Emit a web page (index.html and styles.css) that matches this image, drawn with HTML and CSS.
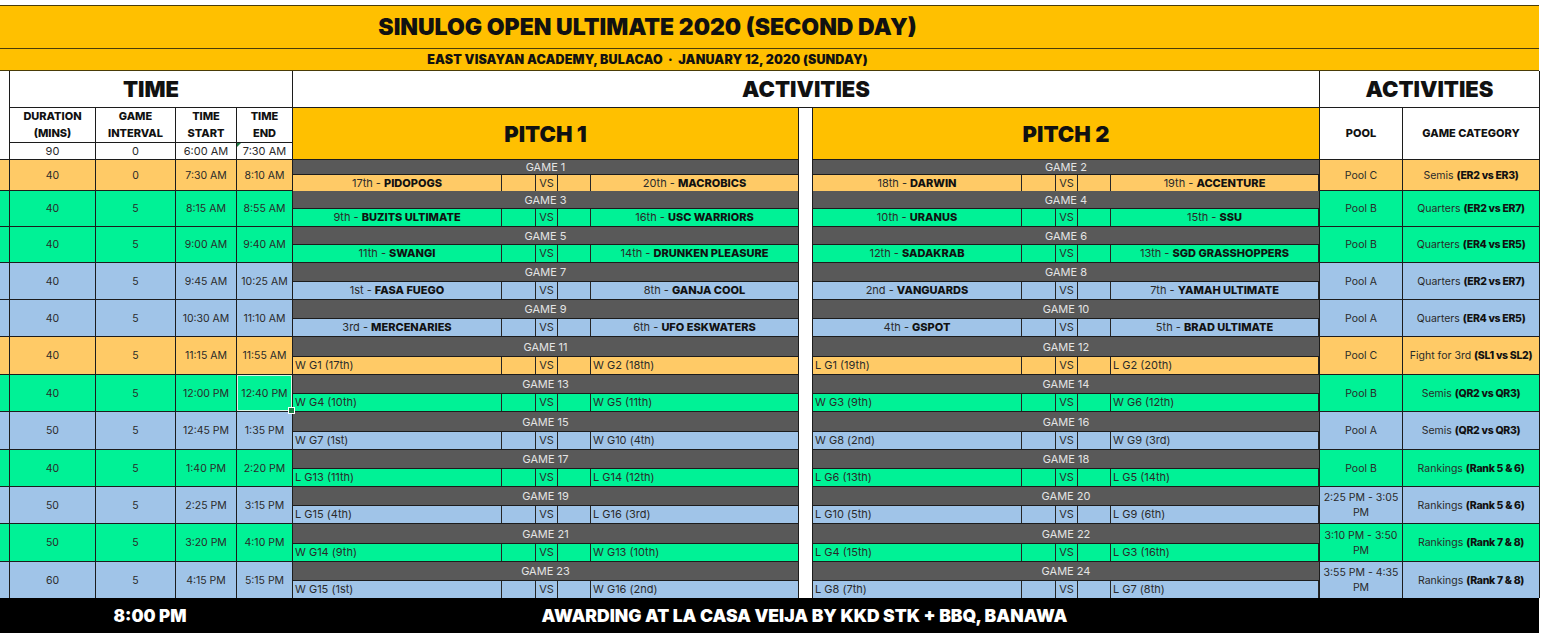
FILE: index.html
```html
<!DOCTYPE html>
<html>
<head>
<meta charset="utf-8">
<title>Sinulog Open Ultimate 2020</title>
<link rel="stylesheet" href="styles.css">
</head>
<body>
<div class="sheet">
  <div class="title">SINULOG OPEN ULTIMATE 2020 (SECOND DAY)</div>
  <div class="subtitle">EAST VISAYAN ACADEMY, BULACAO &nbsp;·&nbsp; JANUARY 12, 2020 (SUNDAY)</div>
  <div class="grid">
    <div class="hcell left-head"></div>
    <div class="hcell big time-head">TIME</div>
    <div class="hcell big act-head">ACTIVITIES</div>
    <div class="hcell big act2-head">ACTIVITIES</div>

    <div class="hcell colh c2">DURATION<br>(MINS)</div>
    <div class="hcell colh c3">GAME<br>INTERVAL</div>
    <div class="hcell colh c4">TIME<br>START</div>
    <div class="hcell colh c5">TIME<br>END</div>
    <div class="pitch p1">PITCH 1</div>
    <div class="gapcol"></div>
    <div class="pitch p2">PITCH 2</div>
    <div class="hcell colh pool-head">POOL</div>
    <div class="hcell colh cat-head">GAME CATEGORY</div>

    <div class="hcell val c2 r3">90</div>
    <div class="hcell val c3 r3">0</div>
    <div class="hcell val c4 r3">6:00 AM</div>
    <div class="hcell val c5 r3 tri">7:30 AM</div>

    <!-- Row 1 -->
    <div class="cell y"></div>
    <div class="cell y">40</div>
    <div class="cell y">0</div>
    <div class="cell y">7:30 AM</div>
    <div class="cell y">8:10 AM</div>
    <div class="game y"><div class="glabel">GAME 1</div><div class="teams"><div class="team">17th - <b>PIDOPOGS</b></div><div></div><div class="vs">VS</div><div></div><div class="team">20th - <b>MACROBICS</b></div></div></div>
    <div class="game y"><div class="glabel">GAME 2</div><div class="teams"><div class="team">18th - <b>DARWIN</b></div><div></div><div class="vs">VS</div><div></div><div class="team">19th - <b>ACCENTURE</b></div></div></div>
    <div class="cell y">Pool C</div>
    <div class="cell y cat">Semis&nbsp;<b>(ER2 vs ER3)</b></div>

    <!-- Row 2 -->
    <div class="cell g"></div>
    <div class="cell g">40</div>
    <div class="cell g">5</div>
    <div class="cell g">8:15 AM</div>
    <div class="cell g">8:55 AM</div>
    <div class="game g"><div class="glabel">GAME 3</div><div class="teams"><div class="team">9th - <b>BUZITS ULTIMATE</b></div><div></div><div class="vs">VS</div><div></div><div class="team">16th - <b>USC WARRIORS</b></div></div></div>
    <div class="game g"><div class="glabel">GAME 4</div><div class="teams"><div class="team">10th - <b>URANUS</b></div><div></div><div class="vs">VS</div><div></div><div class="team">15th - <b>SSU</b></div></div></div>
    <div class="cell g">Pool B</div>
    <div class="cell g cat">Quarters&nbsp;<b>(ER2 vs ER7)</b></div>

    <!-- Row 3 -->
    <div class="cell g"></div>
    <div class="cell g">40</div>
    <div class="cell g">5</div>
    <div class="cell g">9:00 AM</div>
    <div class="cell g">9:40 AM</div>
    <div class="game g"><div class="glabel">GAME 5</div><div class="teams"><div class="team">11th - <b>SWANGI</b></div><div></div><div class="vs">VS</div><div></div><div class="team">14th - <b>DRUNKEN PLEASURE</b></div></div></div>
    <div class="game g"><div class="glabel">GAME 6</div><div class="teams"><div class="team">12th - <b>SADAKRAB</b></div><div></div><div class="vs">VS</div><div></div><div class="team">13th - <b>SGD GRASSHOPPERS</b></div></div></div>
    <div class="cell g">Pool B</div>
    <div class="cell g cat">Quarters&nbsp;<b>(ER4 vs ER5)</b></div>

    <!-- Row 4 -->
    <div class="cell b"></div>
    <div class="cell b">40</div>
    <div class="cell b">5</div>
    <div class="cell b">9:45 AM</div>
    <div class="cell b">10:25 AM</div>
    <div class="game b"><div class="glabel">GAME 7</div><div class="teams"><div class="team">1st - <b>FASA FUEGO</b></div><div></div><div class="vs">VS</div><div></div><div class="team">8th - <b>GANJA COOL</b></div></div></div>
    <div class="game b"><div class="glabel">GAME 8</div><div class="teams"><div class="team">2nd - <b>VANGUARDS</b></div><div></div><div class="vs">VS</div><div></div><div class="team">7th - <b>YAMAH ULTIMATE</b></div></div></div>
    <div class="cell b">Pool A</div>
    <div class="cell b cat">Quarters&nbsp;<b>(ER2 vs ER7)</b></div>

    <!-- Row 5 -->
    <div class="cell b"></div>
    <div class="cell b">40</div>
    <div class="cell b">5</div>
    <div class="cell b">10:30 AM</div>
    <div class="cell b">11:10 AM</div>
    <div class="game b"><div class="glabel">GAME 9</div><div class="teams"><div class="team">3rd - <b>MERCENARIES</b></div><div></div><div class="vs">VS</div><div></div><div class="team">6th - <b>UFO ESKWATERS</b></div></div></div>
    <div class="game b"><div class="glabel">GAME 10</div><div class="teams"><div class="team">4th - <b>GSPOT</b></div><div></div><div class="vs">VS</div><div></div><div class="team">5th - <b>BRAD ULTIMATE</b></div></div></div>
    <div class="cell b">Pool A</div>
    <div class="cell b cat">Quarters&nbsp;<b>(ER4 vs ER5)</b></div>

    <!-- Row 6 -->
    <div class="cell y"></div>
    <div class="cell y">40</div>
    <div class="cell y">5</div>
    <div class="cell y">11:15 AM</div>
    <div class="cell y">11:55 AM</div>
    <div class="game y left"><div class="glabel">GAME 11</div><div class="teams"><div class="team">W G1 (17th)</div><div></div><div class="vs">VS</div><div></div><div class="team">W G2 (18th)</div></div></div>
    <div class="game y left"><div class="glabel">GAME 12</div><div class="teams"><div class="team">L G1 (19th)</div><div></div><div class="vs">VS</div><div></div><div class="team">L G2 (20th)</div></div></div>
    <div class="cell y">Pool C</div>
    <div class="cell y cat">Fight for 3rd&nbsp;<b>(SL1 vs SL2)</b></div>

    <!-- Row 7 -->
    <div class="cell g"></div>
    <div class="cell g">40</div>
    <div class="cell g">5</div>
    <div class="cell g">12:00 PM</div>
    <div class="cell g sel">12:40 PM</div>
    <div class="game g left"><div class="glabel">GAME 13</div><div class="teams"><div class="team">W G4 (10th)</div><div></div><div class="vs">VS</div><div></div><div class="team">W G5 (11th)</div></div></div>
    <div class="game g left"><div class="glabel">GAME 14</div><div class="teams"><div class="team">W G3 (9th)</div><div></div><div class="vs">VS</div><div></div><div class="team">W G6 (12th)</div></div></div>
    <div class="cell g">Pool B</div>
    <div class="cell g cat">Semis&nbsp;<b>(QR2 vs QR3)</b></div>

    <!-- Row 8 -->
    <div class="cell b"></div>
    <div class="cell b">50</div>
    <div class="cell b">5</div>
    <div class="cell b">12:45 PM</div>
    <div class="cell b">1:35 PM</div>
    <div class="game b left"><div class="glabel">GAME 15</div><div class="teams"><div class="team">W G7 (1st)</div><div></div><div class="vs">VS</div><div></div><div class="team">W G10 (4th)</div></div></div>
    <div class="game b left"><div class="glabel">GAME 16</div><div class="teams"><div class="team">W G8 (2nd)</div><div></div><div class="vs">VS</div><div></div><div class="team">W G9 (3rd)</div></div></div>
    <div class="cell b">Pool A</div>
    <div class="cell b cat">Semis&nbsp;<b>(QR2 vs QR3)</b></div>

    <!-- Row 9 -->
    <div class="cell g"></div>
    <div class="cell g">40</div>
    <div class="cell g">5</div>
    <div class="cell g">1:40 PM</div>
    <div class="cell g">2:20 PM</div>
    <div class="game g left"><div class="glabel">GAME 17</div><div class="teams"><div class="team">L G13 (11th)</div><div></div><div class="vs">VS</div><div></div><div class="team">L G14 (12th)</div></div></div>
    <div class="game g left"><div class="glabel">GAME 18</div><div class="teams"><div class="team">L G6 (13th)</div><div></div><div class="vs">VS</div><div></div><div class="team">L G5 (14th)</div></div></div>
    <div class="cell g">Pool B</div>
    <div class="cell g cat">Rankings&nbsp;<b>(Rank 5 &amp; 6)</b></div>

    <!-- Row 10 -->
    <div class="cell b"></div>
    <div class="cell b">50</div>
    <div class="cell b">5</div>
    <div class="cell b">2:25 PM</div>
    <div class="cell b">3:15 PM</div>
    <div class="game b left"><div class="glabel">GAME 19</div><div class="teams"><div class="team">L G15 (4th)</div><div></div><div class="vs">VS</div><div></div><div class="team">L G16 (3rd)</div></div></div>
    <div class="game b left"><div class="glabel">GAME 20</div><div class="teams"><div class="team">L G10 (5th)</div><div></div><div class="vs">VS</div><div></div><div class="team">L G9 (6th)</div></div></div>
    <div class="cell b wrap">2:25 PM - 3:05 PM</div>
    <div class="cell b cat">Rankings&nbsp;<b>(Rank 5 &amp; 6)</b></div>

    <!-- Row 11 -->
    <div class="cell g"></div>
    <div class="cell g">50</div>
    <div class="cell g">5</div>
    <div class="cell g">3:20 PM</div>
    <div class="cell g">4:10 PM</div>
    <div class="game g left"><div class="glabel">GAME 21</div><div class="teams"><div class="team">W G14 (9th)</div><div></div><div class="vs">VS</div><div></div><div class="team">W G13 (10th)</div></div></div>
    <div class="game g left"><div class="glabel">GAME 22</div><div class="teams"><div class="team">L G4 (15th)</div><div></div><div class="vs">VS</div><div></div><div class="team">L G3 (16th)</div></div></div>
    <div class="cell g wrap">3:10 PM - 3:50 PM</div>
    <div class="cell g cat">Rankings&nbsp;<b>(Rank 7 &amp; 8)</b></div>

    <!-- Row 12 -->
    <div class="cell b"></div>
    <div class="cell b">60</div>
    <div class="cell b">5</div>
    <div class="cell b">4:15 PM</div>
    <div class="cell b">5:15 PM</div>
    <div class="game b left"><div class="glabel">GAME 23</div><div class="teams"><div class="team">W G15 (1st)</div><div></div><div class="vs">VS</div><div></div><div class="team">W G16 (2nd)</div></div></div>
    <div class="game b left"><div class="glabel">GAME 24</div><div class="teams"><div class="team">L G8 (7th)</div><div></div><div class="vs">VS</div><div></div><div class="team">L G7 (8th)</div></div></div>
    <div class="cell b wrap">3:55 PM - 4:35 PM</div>
    <div class="cell b cat">Rankings&nbsp;<b>(Rank 7 &amp; 8)</b></div>
  </div>
  <div class="footer">
    <div></div>
    <div class="ftime">8:00 PM</div>
    <div class="fnote">AWARDING AT LA CASA VEIJA BY KKD STK + BBQ, BANAWA</div>
    <div></div>
  </div>
</div>
</body>
</html>
```

FILE: styles.css
```css
* { box-sizing: border-box; }

body {
  margin: 0;
  background: #ffffff;
  font-family: "Inter", "Noto Sans", sans-serif;
  color: #1d1d1d;
}

.sheet {
  width: 1540px;
  padding-top: 5px;
}

.title {
  height: 44px;
  background: #ffc000;
  border-top: 1px solid #4a3c08;
  border-bottom: 1px solid #4a3c08;
  display: flex;
  align-items: center;
  justify-content: center;
  padding-right: 244px;
  font-weight: 900;
  font-size: 23px;
  color: #111;
  width: 1539px;
}

.subtitle {
  height: 22px;
  background: #ffc000;
  border-bottom: 1px solid #4a3c08;
  display: flex;
  align-items: center;
  justify-content: center;
  padding-right: 244px;
  font-weight: 900;
  font-size: 12.5px;
  letter-spacing: 0.15px;
  color: #111;
  width: 1539px;
}

.grid {
  display: grid;
  grid-template-columns: 9px 85px 79px 60px 55px 505px 13px 506px 82px 136px;
  grid-template-rows: 36px 34px 16px 30px 35px 35px 36px 36px 37px 36px 37px 36px 36px 37px 36px;
  gap: 1px;
  background: #1c1c1c;
  padding-right: 1px;
  width: 1540px;
}

.hcell {
  background: #ffffff;
  display: flex;
  align-items: center;
  justify-content: center;
  text-align: center;
}

.left-head { grid-column: 1; grid-row: 1 / 4; }
.time-head { grid-column: 2 / 6; grid-row: 1; }
.act-head { grid-column: 6 / 9; grid-row: 1; }
.act2-head { grid-column: 9 / 11; grid-row: 1; }

.big {
  font-weight: 900;
  font-size: 22px;
  color: #111;
}

.colh {
  font-weight: 800;
  font-size: 11px;
  line-height: 17px;
  color: #111;
}

.c2 { grid-column: 2; grid-row: 2; }
.c3 { grid-column: 3; grid-row: 2; }
.c4 { grid-column: 4; grid-row: 2; }
.c5 { grid-column: 5; grid-row: 2; }
.c2.r3, .c3.r3, .c4.r3, .c5.r3 { grid-row: 3; }

.pool-head { grid-column: 9; grid-row: 2 / 4; }
.cat-head { grid-column: 10; grid-row: 2 / 4; }

.val {
  font-size: 11px;
  line-height: 16px;
  color: #2a2a2a;
}

.tri { position: relative; }
.tri::before {
  content: "";
  position: absolute;
  left: 0;
  top: 0;
  border-top: 4px solid #1e7b45;
  border-right: 4px solid transparent;
}

.pitch {
  background: #ffc000;
  display: flex;
  align-items: center;
  justify-content: center;
  font-weight: 900;
  font-size: 22px;
  color: #111;
  grid-row: 2 / 4;
}
.p1 { grid-column: 6; }
.p2 { grid-column: 8; }

.gapcol {
  grid-column: 7;
  grid-row: 2 / 16;
  background: #ffffff;
}

.y { --bg: #ffca66; }
.g { --bg: #00f296; }
.b { --bg: #a0c4e8; }

.cell {
  background: var(--bg);
  display: flex;
  align-items: center;
  justify-content: center;
  text-align: center;
  font-size: 10.5px;
  line-height: 15px;
  color: #2a2a2a;
  white-space: nowrap;
}

.cell b { font-weight: 800; color: #111; letter-spacing: -0.3px; }

.cell.cat { font-size: 10.5px; }

.cell.wrap {
  white-space: normal;
  padding: 0 1px;
}

.sel { position: relative; }
.sel::after {
  content: "";
  position: absolute;
  inset: 0;
  border: 1px solid #d9f7e6;
}
.sel::before {
  content: "";
  position: absolute;
  right: -3px;
  bottom: -3px;
  width: 5px;
  height: 5px;
  background: #1e7b45;
  border: 1px solid #ffffff;
  z-index: 2;
}

.game {
  display: flex;
  flex-direction: column;
  gap: 1px;
  background: #1c1c1c;
}

.glabel {
  flex: 1;
  background: #595959;
  color: #e4e4e4;
  font-size: 11px;
  display: flex;
  align-items: center;
  justify-content: center;
}

.teams {
  height: 17px;
  display: grid;
  grid-template-columns: 208px 33px 21px 32px 207px;
  gap: 1px;
  background: #262626;
}

.teams > div {
  background: var(--bg);
  font-size: 11px;
  line-height: 17px;
  color: #2a2a2a;
  text-align: center;
  white-space: nowrap;
}

.teams b { font-weight: 800; color: #111; }

.game.left .team {
  text-align: left;
  padding-left: 2px;
}

.footer {
  display: grid;
  grid-template-columns: 9px 282px 1027px 1fr;
  height: 35px;
  background: #000000;
  color: #ffffff;
  align-items: center;
  text-align: center;
  font-weight: 900;
  width: 1539px;
}

.ftime { font-size: 17px; }
.fnote { font-size: 17.5px; }
```
